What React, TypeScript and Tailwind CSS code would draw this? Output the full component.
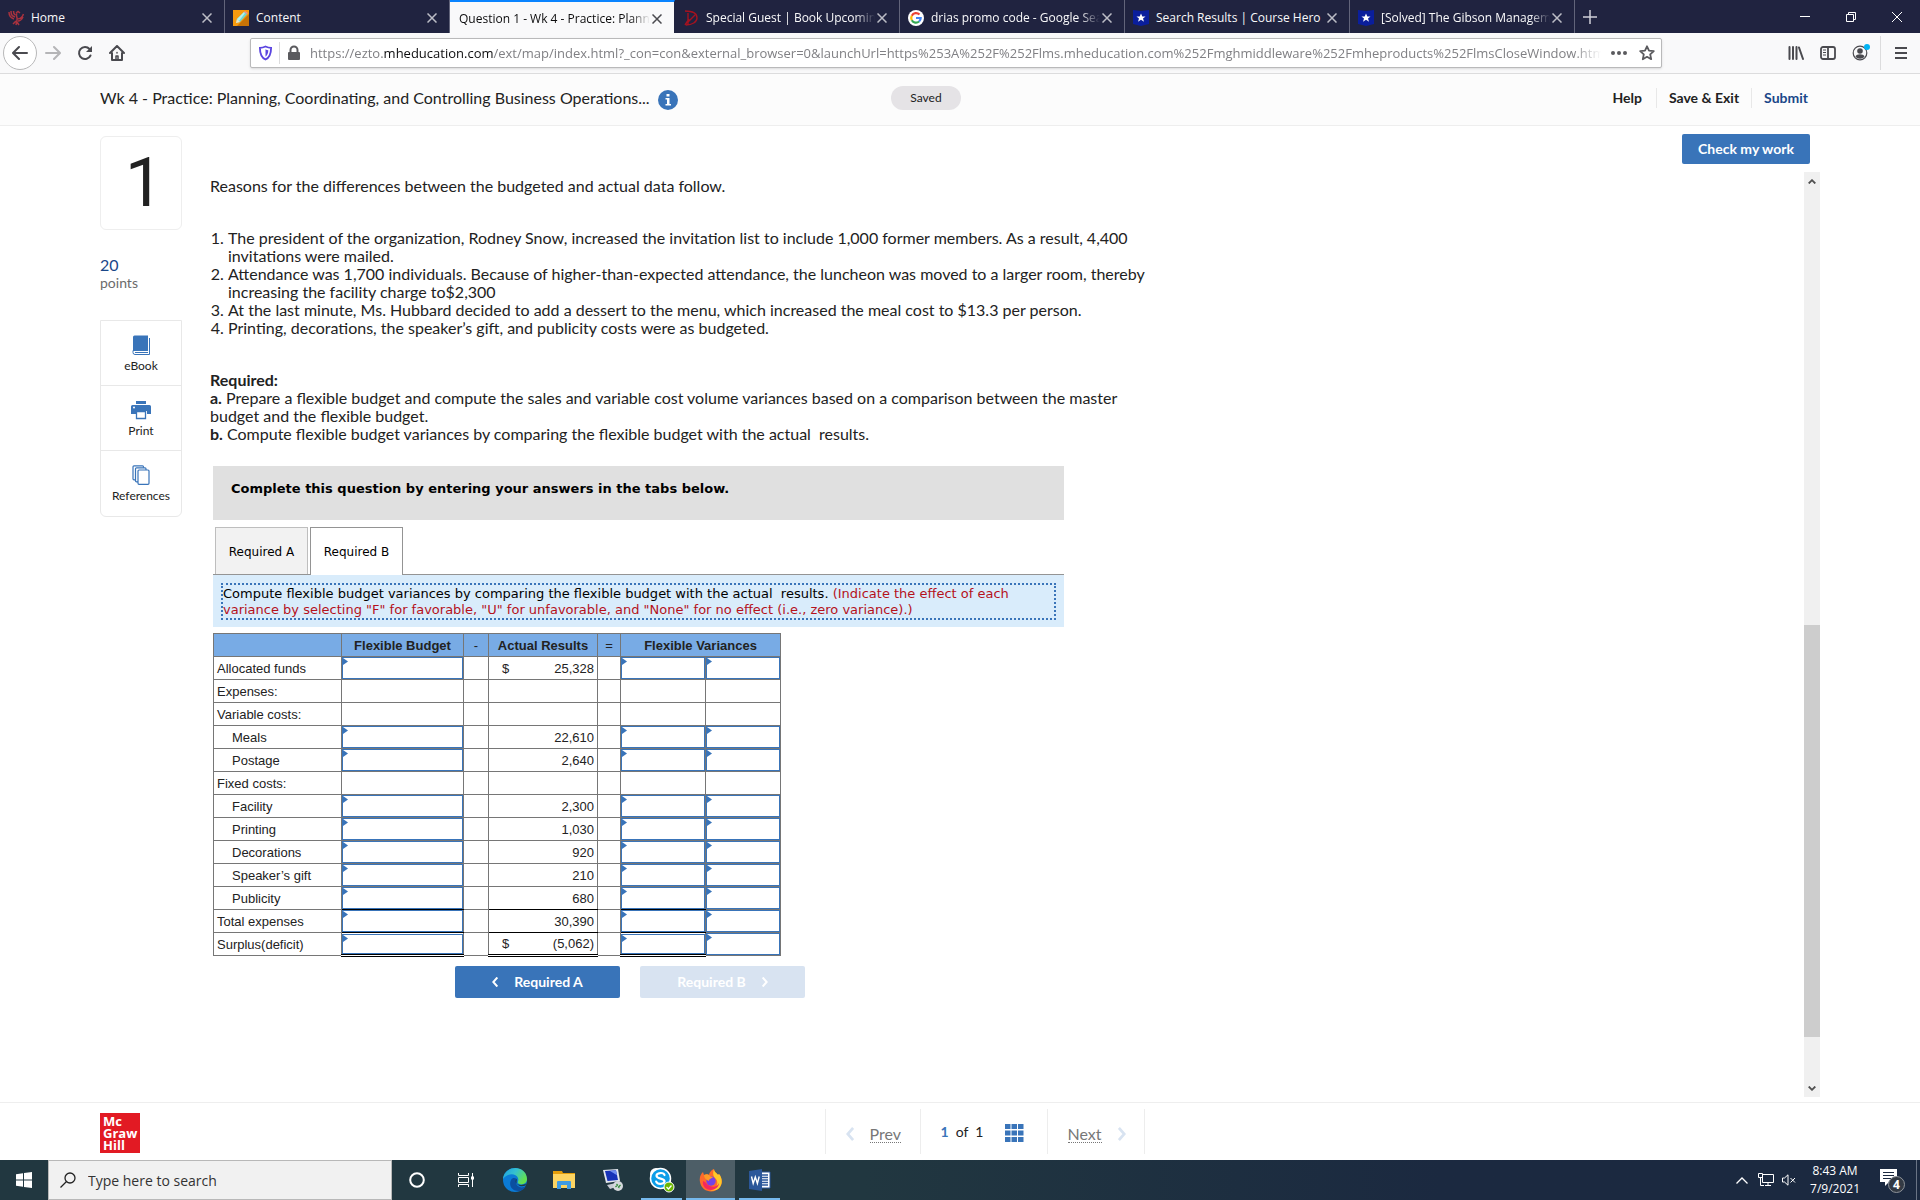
import type { ReactNode } from "react";
import clsx from "clsx";

type Tab = {
	title: string;
	icon?: ReactNode;
	active?: boolean;
	fade?: boolean;
};

type Row = {
	label: string;
	indent?: boolean;
	actual?: string;
	dollar?: boolean;
	blank?: boolean;
	line?: "single" | "double";
};

const PhoenixIcon = () => (
	<svg viewBox="0 0 16 16" className="size-4" fill="none" stroke="#a8323e" strokeWidth="1.500">
		<path d="M1 2c0 4 2 6 5 7M3 1c0 4 1 5 4 6M5.500 1c0 3 .5 3 2 4M15.500 4c-1 3-3 5-6 5M15 7c-1 2-3 4-5 4" />
		<path d="M8 3l2-1.500 2 1.500M9 3c-2 3 1 4 0 7l-1 5M8 11l-3 3M9 12l2 3" />
	</svg>
);

const PencilIcon = () => (
	<svg viewBox="0 0 16 16" className="size-4">
		<path d="M0 0h16v16H0z" fill="#f79a0e" />
		<path d="M16 4v12H4z" fill="#c77306" />
		<path d="M3 13l1-4 7-7 3 2-7 8z" fill="#6fd7d3" />
		<path d="M4 9l7-7 1 1-6 8z" fill="#b8f0ea" />
		<path d="M3 13l1-4 3 3z" fill="#f9e3bd" />
		<path d="M11 2l1-1 3 2-1 1z" fill="#ee8d9b" />
	</svg>
);

const DjIcon = () => (
	<svg viewBox="0 0 16 16" className="size-4" fill="none" stroke="#a5121f" strokeWidth="1.400">
		<path d="M2 1c8 0 12 3 12 7s-5 7-11 7M5 3v12M5 12l7-7M2 15l4-6" />
	</svg>
);

const GoogleIcon = () => (
	<svg viewBox="0 0 16 16" className="size-4">
		<circle cx="8" cy="8" r="8" fill="#fff" />
		<g fill="none" strokeWidth="2.200">
			<path d="M11.500 4.600A4.800 4.800 0 0 0 3.800 5.700" stroke="#ea4335" />
			<path d="M3.800 5.700a4.800 4.800 0 0 0 0 4.600" stroke="#fbbc05" />
			<path d="M3.800 10.300a4.800 4.800 0 0 0 7.300 1.200" stroke="#34a853" />
			<path d="M11.100 11.500A4.800 4.800 0 0 0 12.700 8H8" stroke="#4285f4" />
		</g>
	</svg>
);

const HeroIcon = () => (
	<svg viewBox="0 0 16 16" className="size-4">
		<path d="M0 0l8 1 8-1v14l-8 2-8-2z" fill="#0a1e9c" />
		<path d="M8 3.500l1.300 3h3.200L10 8.500l1 3.200L8 9.800l-3 1.900 1-3.200-2.500-2h3.200z" fill="#fff" />
	</svg>
);

const tabs: Tab[] = [
	{ title: "Home", icon: <PhoenixIcon /> },
	{ title: "Content", icon: <PencilIcon /> },
	{ title: "Question 1 - Wk 4 - Practice: Planni", active: true, fade: true },
	{ title: "Special Guest | Book Upcoming", icon: <DjIcon />, fade: true },
	{ title: "drias promo code - Google Sea", icon: <GoogleIcon />, fade: true },
	{ title: "Search Results | Course Hero", icon: <HeroIcon /> },
	{ title: "[Solved] The Gibson Manageme", icon: <HeroIcon />, fade: true },
];

const rows: Row[] = [
	{ label: "Allocated funds", actual: "25,328", dollar: true },
	{ label: "Expenses:", blank: true },
	{ label: "Variable costs:", blank: true },
	{ label: "Meals", indent: true, actual: "22,610" },
	{ label: "Postage", indent: true, actual: "2,640" },
	{ label: "Fixed costs:", blank: true },
	{ label: "Facility", indent: true, actual: "2,300" },
	{ label: "Printing", indent: true, actual: "1,030" },
	{ label: "Decorations", indent: true, actual: "920" },
	{ label: "Speaker’s gift", indent: true, actual: "210" },
	{ label: "Publicity", indent: true, actual: "680", line: "single" },
	{ label: "Total expenses", actual: "30,390", line: "single" },
	{ label: "Surplus(deficit)", actual: "(5,062)", dollar: true, line: "double" },
];

const CloseIcon = () => (
	<svg viewBox="0 0 10 10" className="size-[10px]" fill="none" stroke="currentColor" strokeWidth="1.500">
		<path d="M.5.5l9 9M9.500.5l-9 9" />
	</svg>
);

const TabStrip = () => (
	<div className="flex h-[33px] bg-[#202340] text-xs text-[#f9f9fa]">
		{tabs.map((tab) => (
			<div
				key={tab.title}
				className={clsx(
					"flex w-[225px] min-w-0 items-center border-r pt-[2px] pr-3 pl-2",
					tab.active ? "border-t-2 border-r-[#202340] border-t-[#0a84ff] bg-[#f9f9fa] pt-0 text-[#0c0c0d]" : "border-[#62647a]",
				)}
			>
				{tab.icon}
				<span
					className={clsx(
						"flex-1 overflow-hidden whitespace-nowrap",
						tab.icon ? "ml-[7px]" : "ml-px",
						tab.fade && "mr-[2px] [mask-image:linear-gradient(to_left,transparent,black_20px)]",
					)}
				>
					{tab.title}
				</span>
				<button type="button" aria-label="Close tab" className={tab.active ? "text-[#4a4a4f]" : "text-[#bcbdc6]"}>
					<CloseIcon />
				</button>
			</div>
		))}
		<button type="button" aria-label="New tab" className="ml-2 text-[#cfd0d8]">
			<svg viewBox="0 0 14 14" className="size-[14px]" fill="none" stroke="currentColor" strokeWidth="1.500">
				<path d="M7 0v14M0 7h14" />
			</svg>
		</button>
		<div className="ml-auto flex items-center gap-9 pr-[18px]">
			<button type="button" aria-label="Minimize">
				<svg viewBox="0 0 10 10" className="size-[10px]" stroke="#fff">
					<path d="M0 4.500h10" />
				</svg>
			</button>
			<button type="button" aria-label="Restore">
				<svg viewBox="0 0 10 10" className="size-[10px]" fill="none" stroke="#fff">
					<path d="M.5 2.500h7v7h-7zM2.500 2V.5h7v7H8" />
				</svg>
			</button>
			<button type="button" aria-label="Close window">
				<svg viewBox="0 0 10 10" className="size-[10px]" fill="none" stroke="#fff">
					<path d="M0 0l10 10M10 0L0 10" />
				</svg>
			</button>
		</div>
	</div>
);

const Toolbar = () => (
	<div className="flex h-[41px] items-center border-b border-[#dcdcdd] bg-[#f9f9fa] text-[#4a4a4f]">
		<button type="button" aria-label="Back" className="ml-[3px] flex size-[34px] items-center justify-center rounded-full border border-[#b8b8b9] bg-white">
			<svg viewBox="0 0 16 16" className="size-4" fill="none" stroke="currentColor" strokeWidth="2" strokeLinecap="round" strokeLinejoin="round">
				<path d="M15 8H1.500M7 2L1 8l6 6" />
			</svg>
		</button>
		<button type="button" aria-label="Forward" className="ml-2 text-[#b5b5b7]">
			<svg viewBox="0 0 16 16" className="size-4" fill="none" stroke="currentColor" strokeWidth="2" strokeLinecap="round" strokeLinejoin="round">
				<path d="M1 8h13.500M9 2l6 6-6 6" />
			</svg>
		</button>
		<button type="button" aria-label="Reload" className="ml-4">
			<svg viewBox="0 0 16 16" className="size-4" fill="none" stroke="currentColor" strokeWidth="2">
				<path d="M13.500 10.500A6 6 0 1 1 12.500 4" strokeLinecap="round" />
				<path d="M15 1v6H9z" fill="currentColor" stroke="none" />
			</svg>
		</button>
		<button type="button" aria-label="Home" className="ml-4">
			<svg viewBox="0 0 16 16" className="size-4" fill="none" stroke="currentColor" strokeWidth="2" strokeLinejoin="round" strokeLinecap="round">
				<path d="M1 8l7-7 7 7M3 8v7h10V8" />
				<path d="M7 15v-4h2v4M8 7.500v.5" strokeWidth="1.500" />
			</svg>
		</button>
		<div className="ml-[125px] flex h-[30px] min-w-0 flex-1 items-center rounded-xs border border-[#b9b9ba] bg-white pr-1 pl-2 shadow-sm">
			<svg viewBox="0 0 14 16" className="h-4 w-[13px] shrink-0" fill="none">
				<path d="M1 2.500C3 2.500 5 2 7 1c2 1 4 1.500 6 1.500 0 6-1 10-6 12.500C2 12.500 1 8.500 1 2.500z" stroke="#5b45e0" strokeWidth="2" />
				<path d="M7 4v8c2-1.500 3-4 3-7-1 0-2-.4-3-1z" fill="#5b45e0" />
			</svg>
			<span className="ml-[7px] h-[22px] w-px bg-[#dcdcdd]" />
			<svg viewBox="0 0 14 16" className="ml-[7px] h-4 w-[14px] shrink-0">
				<path d="M3.500 8V5a3.500 3.500 0 0 1 7 0v3" fill="none" stroke="#5a5a5e" strokeWidth="2" />
				<rect x="1" y="7" width="12" height="8" rx="1" fill="#5a5a5e" />
			</svg>
			<div className="mr-[10px] ml-[9px] flex-1 overflow-hidden pt-px text-[13px] whitespace-nowrap text-[#808084] [mask-image:linear-gradient(to_left,transparent,black_28px)]">
				https://ezto.<span className="text-[#0c0c0d]">mheducation.com</span>
				/ext/map/index.html?_con=con&amp;external_browser=0&amp;launchUrl=https%253A%252F%252Flms.mheducation.com%252Fmghmiddleware%252Fmheproducts%252FlmsCloseWindow.html
			</div>
			<svg viewBox="0 0 16 4" className="h-1 w-4 shrink-0" fill="#5a5a5e">
				<circle cx="2" cy="2" r="2" />
				<circle cx="8" cy="2" r="2" />
				<circle cx="14" cy="2" r="2" />
			</svg>
			<button type="button" aria-label="Bookmark" className="mr-[2px] ml-3">
				<svg viewBox="0 0 16 16" className="size-4" fill="none" stroke="#5a5a5e" strokeWidth="1.800" strokeLinejoin="round">
					<path d="M8 1.300l2 4.400 4.800.5-3.600 3.200 1 4.800L8 11.800l-4.200 2.400 1-4.800L1.200 6.200 6 5.700z" />
				</svg>
			</button>
		</div>
		<div className="ml-[126px] flex items-center gap-4">
			<button type="button" aria-label="Library">
				<svg viewBox="0 0 16 16" className="size-4" fill="none" stroke="currentColor" strokeWidth="2" strokeLinecap="round">
					<path d="M1.500 2v12M5 2v12M8.500 2v12M11 2.500L15 14" />
				</svg>
			</button>
			<button type="button" aria-label="Sidebars">
				<svg viewBox="0 0 16 16" className="size-4" fill="none" stroke="currentColor" strokeWidth="1.800">
					<rect x="1" y="2" width="14" height="12" rx="2" />
					<path d="M8 2v12" />
					<path d="M3 5h3M3 7.500h3M3 10h3" strokeWidth="1" />
				</svg>
			</button>
			<button type="button" aria-label="Account">
				<svg viewBox="0 0 18 18" className="size-[18px]" fill="none">
					<circle cx="8" cy="9" r="6.800" stroke="currentColor" strokeWidth="1.200" />
					<circle cx="8" cy="7" r="2.800" fill="currentColor" />
					<path d="M3.500 12.500c1-3 8-3 9 0-2 3-7 3-9 0z" fill="currentColor" />
					<circle cx="15" cy="3" r="3" fill="#00b3f4" />
				</svg>
			</button>
		</div>
		<span className="ml-[10px] h-[34px] w-px bg-[#dcdcdd]" />
		<button type="button" aria-label="Menu" className="mr-[13px] ml-[14px]">
			<svg viewBox="0 0 12 14" className="h-[14px] w-3" stroke="currentColor" strokeWidth="2">
				<path d="M0 2h12M0 7h12M0 12h12" />
			</svg>
		</button>
	</div>
);

const AssignmentHeader = () => (
	<header className="flex h-[52px] shrink-0 items-center border-b border-[#eee] bg-[#fcfcfc] pr-[112px] pb-1 pl-[100px] text-[#222]">
		<div className="flex flex-1 items-center">
			<h1 className="text-base whitespace-nowrap">Wk 4 - Practice: Planning, Coordinating, and Controlling Business Operations...</h1>
			<button type="button" aria-label="Information" className="ml-2 pt-1">
				<svg viewBox="0 0 20 20" className="size-5">
					<circle cx="10" cy="10" r="10" fill="#3974b9" />
					<path d="M8.500 4h3v2.500h-3zM7.500 8h4v6H13v1.500H7.500V14H9V9.500H7.500z" fill="#fff" />
				</svg>
			</button>
		</div>
		<span className="mr-14 flex h-6 w-[70px] items-center justify-center rounded-full bg-[#e5e3e6] text-xs">Saved</span>
		<nav className="flex flex-1 justify-end text-sm leading-5 font-bold">
			<a href="#help" className="pr-[14px]">Help</a>
			<a href="#save" className="border-x border-[#e8e8e8] px-3">Save &amp; Exit</a>
			<a href="#submit" className="pl-3 text-[#1a4789]">Submit</a>
		</nav>
	</header>
);

const ToolButton = ({ label, children }: { label: string; children: ReactNode }) => (
	<button type="button" className="flex h-[65px] w-full flex-col items-center gap-[3px] pt-[14px] text-xs leading-4 text-[#222]">
		{children}
		{label}
	</button>
);

const SideRail = () => (
	<aside className="w-[82px] shrink-0">
		<div className="h-[94px] rounded-md border border-[#eee] pl-[6px] text-center font-['Roboto',sans-serif] text-[68px] leading-[92px] text-[#222]">1</div>
		<p className="mt-[25px] text-base leading-5 text-[#1a4789]">20</p>
		<p className="text-sm leading-4 text-[#6b6b6b]">points</p>
		<div className="mt-[29px] divide-y divide-[#e8e8e8] rounded-b-md border border-[#e8e8e8]">
			<ToolButton label="eBook">
				<svg viewBox="0 0 18 20" className="h-5 w-[18px]" fill="none">
					<path d="M1 2a1.500 1.500 0 0 1 1.500-1.500H16V16H1z" fill="#3974b9" />
					<path d="M1 15.500v2a2 2 0 0 0 2 2h14.500V3M3 17.500h13" stroke="#3974b9" />
				</svg>
			</ToolButton>
			<ToolButton label="Print">
				<svg viewBox="0 0 20 20" className="size-5" fill="#3974b9">
					<path d="M5 1h10v3H5zM1.500 5h17A1.500 1.500 0 0 1 20 6.500V14h-4v-3H5v3H0V6.500A1.500 1.500 0 0 1 1.500 5z" />
					<path d="M5.500 11.500h9v7h-9z" fill="#fff" stroke="#3974b9" strokeWidth="1.300" />
					<circle cx="3" cy="7.500" r="1" fill="#fff" />
				</svg>
			</ToolButton>
			<ToolButton label="References">
				<svg viewBox="0 0 18 20" className="h-5 w-[18px]" fill="#fff" stroke="#3974b9" strokeWidth="1.200">
					<rect x="1" y=".8" width="10.500" height="14" rx="1" />
					<rect x="3.500" y="2.800" width="10.500" height="14" rx="1" />
					<rect x="6" y="5" width="11" height="14.300" rx="1" />
				</svg>
			</ToolButton>
		</div>
	</aside>
);

const Marker = () => (
	<svg viewBox="0 0 6 7" className="pointer-events-none absolute top-px left-0 h-[7px] w-[6px]">
		<path d="M0 0h1l5 3.500L1 7H0z" fill="#3974b9" />
	</svg>
);

const AnswerCell = ({ row, name, choice }: { row: Row; name: string; choice?: boolean }) => {
	const double = row.line === "double" && !choice;
	return (
		<td
			className={clsx(
				"border border-[#767676] p-0",
				!choice && row.line === "single" && "border-b-black",
				double && "border-b-3 border-b-black [border-bottom-style:double]",
			)}
		>
			{!row.blank && (
				<div className="relative">
					{choice ? (
						<select
							aria-label={`${row.label} ${name}`}
							defaultValue=""
							className="block h-[22px] w-full appearance-none border border-[#3974b9] bg-white"
						>
							<option value="" />
							<option>F</option>
							<option>U</option>
							<option>None</option>
						</select>
					) : (
						<input
							type="text"
							aria-label={`${row.label} ${name}`}
							className={clsx("block w-full border border-[#3974b9] bg-white", double ? "h-5" : "h-[22px]")}
						/>
					)}
					<Marker />
				</div>
			)}
		</td>
	);
};

const cell = "border border-[#767676]";

const BudgetTable = () => (
	<table className="mt-[6px] w-[568px] table-fixed border-collapse font-['Liberation_Sans',sans-serif] text-[13px] leading-[18px] text-[#222]">
		<colgroup>
			<col className="w-[128px]" />
			<col className="w-[122px]" />
			<col className="w-[25px]" />
			<col className="w-[109px]" />
			<col className="w-[23px]" />
			<col className="w-[85px]" />
			<col className="w-[75px]" />
		</colgroup>
		<thead className="bg-[#78abe5]">
			<tr className="h-[23px]">
				<th className={cell} />
				<th className={clsx(cell, "pt-[2px]")}>Flexible Budget</th>
				<th className={clsx(cell, "pt-[2px] font-normal")}>-</th>
				<th className={clsx(cell, "pt-[2px]")}>Actual Results</th>
				<th className={clsx(cell, "pt-[2px] font-normal")}>=</th>
				<th className={clsx(cell, "pt-[2px]")} colSpan={2}>Flexible Variances</th>
			</tr>
		</thead>
		<tbody>
			{rows.map((row) => (
				<tr key={row.label} className="h-[23px]">
					<th scope="row" className={clsx(cell, "pt-[2px] pb-0 text-left font-normal", row.indent ? "pl-[18px]" : "pl-[3px]")}>
						{row.label}
					</th>
					<AnswerCell row={row} name="flexible budget" />
					<td className={cell} />
					<td
						className={clsx(
							cell,
							"pr-[3px] pb-0 pl-[13px]",
							row.line === "single" && "border-b-black",
							row.line === "double" ? "border-b-3 border-b-black pt-0 [border-bottom-style:double]" : "pt-[2px]",
						)}
					>
						<div className="flex justify-between">
							<span>{row.dollar && "$"}</span>
							<span>{row.actual}</span>
						</div>
					</td>
					<td className={cell} />
					<AnswerCell row={row} name="variance" />
					<AnswerCell row={row} name="effect" choice />
				</tr>
			))}
		</tbody>
	</table>
);

const Chevron = ({ left, className }: { left?: boolean; className?: string }) => (
	<svg viewBox="0 0 6 10" className={className} fill="none" stroke="currentColor" strokeWidth="2">
		<path d={left ? "M5.300.5L1.300 5l4 4.500" : "M.7.5l4 4.500-4 4.500"} />
	</svg>
);

const Question = () => (
	<article className="ml-7 flex-1 pt-[41px] text-base leading-[18px] text-[#222]">
		<p>Reasons for the differences between the budgeted and actual data follow.</p>
		<ol className="mt-[34px] list-decimal pl-[18px]">
			<li>
				The president of the organization, Rodney Snow, increased the invitation list to include 1,000 former members. As a result, 4,400
				<br />
				invitations were mailed.
			</li>
			<li>
				Attendance was 1,700 individuals. Because of higher-than-expected attendance, the luncheon was moved to a larger room, thereby
				<br />
				increasing the facility charge to$2,300
			</li>
			<li>At the last minute, Ms. Hubbard decided to add a dessert to the menu, which increased the meal cost to $13.3 per person.</li>
			<li>Printing, decorations, the speaker’s gift, and publicity costs were as budgeted.</li>
		</ol>
		<div className="mt-[34px]">
			<p className="font-bold">Required:</p>
			<p>
				<b>a.</b> Prepare a flexible budget and compute the sales and variable cost volume variances based on a comparison between the master
				<br />
				budget and the flexible budget.
			</p>
			<p>
				<b>b.</b> Compute flexible budget variances by comparing the flexible budget with the actual&nbsp; results.
			</p>
		</div>

		<div className="mt-[23px] ml-[3px] max-w-[851px]">
			<div className="h-[54px] bg-[#e0e0e0] px-[18px] pt-[14px] font-['DejaVu_Sans',sans-serif] text-[13px] font-bold text-black">
				Complete this question by entering your answers in the tabs below.
			</div>
			<div role="tablist" className="mt-[7px] flex gap-[2px] border-b border-[#949494] pl-[2px] font-['DejaVu_Sans',sans-serif] text-[12px] text-black">
				<button type="button" role="tab" className="h-[47px] w-[93px] border border-b-0 border-[#bebebe] bg-[#f2f2f2] pt-px">
					Required A
				</button>
				<button type="button" role="tab" aria-selected="true" className="-mb-px h-[48px] w-[93px] border border-b-0 border-[#949494] bg-white">
					Required B
				</button>
			</div>
			<div className="bg-[#d9ecfb] p-2 pb-[7px]">
				<p className="border-2 border-dotted border-[#3974b9] pt-px font-['DejaVu_Sans',sans-serif] text-[13px] leading-4 text-black">
					Compute flexible budget variances by comparing the flexible budget with the actual&nbsp; results.{" "}
					<span className="text-[#b5121b]">
						(Indicate the effect of each
						<br />
						variance by selecting "F" for favorable, "U" for unfavorable, and "None" for no effect (i.e., zero variance).)
					</span>
				</p>
			</div>
			<BudgetTable />
			<div className="mt-[9px] ml-[242px] flex gap-5 text-sm font-bold text-white">
				<button type="button" className="flex h-8 w-[165px] items-center justify-center gap-4 rounded-xs bg-[#3974b9]">
					<Chevron left className="h-[10px] w-[6px]" />
					Required A
				</button>
				<button type="button" disabled className="flex h-8 w-[165px] items-center justify-center gap-4 rounded-xs bg-[#d8e3f1]">
					Required B
					<Chevron className="h-[10px] w-[6px]" />
				</button>
			</div>
		</div>
	</article>
);

const Scrollbar = () => (
	<div className="flex w-4 flex-1 flex-col items-center bg-[#f0f0f0]">
		<svg viewBox="0 0 8 5" className="mt-[7px] h-[5px] w-2 shrink-0" fill="none" stroke="#505050" strokeWidth="1.800">
			<path d="M.7 4.500L4 1.200l3.300 3.300" />
		</svg>
		<div className="flex-[441]" />
		<div className="w-full flex-[411] bg-[#cdcdcd]" />
		<div className="flex-[49]" />
		<svg viewBox="0 0 8 5" className="mb-[6px] h-[5px] w-2 shrink-0" fill="none" stroke="#505050" strokeWidth="1.800">
			<path d="M.7.5L4 3.800 7.300.5" />
		</svg>
	</div>
);

const Footer = () => (
	<footer className="relative flex h-[58px] shrink-0 items-center justify-center border-t border-[#eee] bg-white text-base">
		<div className="absolute top-[10px] left-[100px] flex size-10 flex-col justify-center bg-[#e21a23] pl-[3px] font-['Open_Sans',sans-serif] text-[13px] leading-[12px] font-bold text-white">
			<span>Mc</span>
			<span>Graw</span>
			<span>Hill</span>
		</div>
		<div className="ml-[49px] flex h-[45px] divide-x divide-[#ededed] border-x border-[#ededed]">
			<div className="flex w-[95px] items-center gap-4 pt-1 pl-[20px] text-[#777]">
				<Chevron left className="h-[14px] w-2 text-[#d8e3f1]" />
				<a href="#prev" className="border-b border-dotted border-[#777] leading-[17px]">Prev</a>
			</div>
			<div className="flex w-[127px] items-center pt-px pl-5 text-sm text-[#222]">
				<span className="font-bold text-[#3974b9]">1</span>
				<span className="mx-[7px]">of</span>
				<span>1</span>
				<button type="button" aria-label="Question grid" className="ml-[22px] pt-[2px]">
					<svg viewBox="0 0 19 18" className="h-[18px] w-[19px]" fill="#3974b9">
						{[0, 6.5, 13].map((y) => [0, 6.5, 13].map((x) => <rect key={`${x}-${y}`} x={x} y={y} width="5.500" height="5" />))}
					</svg>
				</button>
			</div>
			<div className="flex w-[96px] items-center gap-4 pt-1 pl-5 text-[#777]">
				<a href="#next" className="border-b border-dotted border-[#777] leading-[17px]">Next</a>
				<Chevron className="h-[14px] w-2 text-[#d8e3f1]" />
			</div>
		</div>
	</footer>
);

const EdgeIcon = () => (
	<svg viewBox="0 0 24 24" className="size-6">
		<defs>
			<linearGradient id="edge-top" x1="0" y1="0" x2="1" y2=".5">
				<stop offset="0" stopColor="#1b9de2" />
				<stop offset=".5" stopColor="#35c1d0" />
				<stop offset="1" stopColor="#63e04f" />
			</linearGradient>
		</defs>
		<circle cx="12" cy="12" r="12" fill="#0b7bd6" />
		<path d="M0 11C1-3 23-4 24 11c0 5-6 7-9 4-1-1 1-2 0-5C13 5 4 5 0 11z" fill="url(#edge-top)" />
		<path d="M8 12c-3 6 2 12 9 11 3-1 5-3 6-5-4 3-10 1-10-4 0-2 1-3 1-3s-4-3-6 1z" fill="#0b4fa0" />
		<path d="M14 11c-2 1-2 4 1 5.500 3 1 7 0 8-1l-.5 2c-4 2-9 0-9-3.500 0-2 .5-3 .5-3z" fill="#213740" />
	</svg>
);

const FolderIcon = () => (
	<svg viewBox="0 0 22 18" className="h-[18px] w-[22px]">
		<path d="M0 0h9l1 2h12v15H0z" fill="#e39d0b" />
		<path d="M0 3h22v14H0z" fill="#fcd462" />
		<path d="M4 18v-7a1 1 0 0 1 1-1h12a1 1 0 0 1 1 1v7h-4v-4H8v4z" fill="#3f9be3" />
	</svg>
);

const RemoteIcon = () => (
	<svg viewBox="0 0 24 24" className="size-6">
		<path d="M2 2l15-1 2 12-14 2z" fill="#e2e6ee" />
		<path d="M4 3l11-.7 2 9.700L6.500 13z" fill="#1732b8" />
		<path d="M9 3l6-.7 1 5z" fill="#6d8cf0" />
		<path d="M6 17l9-2 3 3-9 3z" fill="#c9ccd4" />
		<circle cx="17" cy="18" r="5" fill="#d5d8dc" />
		<path d="M14.500 19l2-2-1-1M19.500 17l-2 2 1 1" fill="none" stroke="#2f8a36" strokeWidth="1.200" />
	</svg>
);

const SkypeIcon = () => (
	<svg viewBox="0 0 26 26" className="size-[26px]">
		<circle cx="7" cy="7" r="6" fill="#fff" />
		<circle cx="16" cy="16" r="6" fill="#fff" />
		<circle cx="11.500" cy="11.500" r="10" fill="#0c9ee8" stroke="#fff" strokeWidth="1.500" />
		<path d="M15.500 8c-1-3-8-2.500-8 .8 0 3.700 8 2 8 5.500 0 3.200-7 3.500-8.300.3" fill="none" stroke="#fff" strokeWidth="2.200" strokeLinecap="round" />
		<circle cx="20" cy="20" r="5" fill="#6bb700" stroke="#fff" />
		<path d="M17.500 20l2 2 3-3.500" fill="none" stroke="#fff" strokeWidth="1.300" />
	</svg>
);

const FirefoxIcon = () => (
	<svg viewBox="0 0 24 24" className="size-6">
		<path d="M1 14C0 9 2 6 4 4l1 3c2-1 4-1 5 0 0-2 2-5 5-6 0 3 3 4 4 6l1-1c3 4 4 9 1 13-5 7-18 6-20-5z" fill="#ff6a2a" />
		<path d="M15 1c0 3 3 4 4 6l1-1c4 5 3 10 1 13-3 4-7 4-10 3 7-1 9-7 6-11-2-2-4-4-2-10z" fill="#ffc928" />
		<path d="M4 13c-1 5 3 9 8 9 4 0 8-3 8-7-1 3-5 5-9 3-3-1-4-4-7-5z" fill="#f5275e" />
		<circle cx="12" cy="13" r="4.700" fill="#7542e5" />
		<path d="M5 7c2-1 4-1 5 0 1 1 2 2 4 2-1 2-4 1-4 4-3-1-5-3-5-6z" fill="#ff9a25" />
	</svg>
);

const WordIcon = () => (
	<svg viewBox="0 0 22 22" className="size-[22px]">
		<path d="M12 3h9v16h-9z" fill="#fff" stroke="#2b579a" />
		<path d="M13 6h6M13 8.500h6M13 11h6M13 13.500h6M13 16h6" stroke="#2b579a" strokeWidth="1.300" />
		<path d="M0 2l13-2v22L0 20z" fill="#2b579a" />
		<path d="M2.500 7.500L4.200 14.500 6.300 8l2.100 6.500 1.800-7" fill="none" stroke="#fff" strokeWidth="1.400" />
	</svg>
);

const TaskButton = ({ label, running, active, children }: { label: string; running?: boolean; active?: boolean; children: ReactNode }) => (
	<button
		type="button"
		aria-label={label}
		className={clsx("relative flex h-full w-[49px] items-center justify-center", active && "bg-[#4d5e67]")}
	>
		{children}
		{running && <span className={clsx("absolute bottom-0 h-[2px] bg-[#76b9ed]", active ? "inset-x-0" : "inset-x-1")} />}
	</button>
);

const Taskbar = () => (
	<div className="flex h-10 shrink-0 items-center bg-linear-to-r from-[#213740] from-45% to-[#1b2940] to-75% font-['Open_Sans','Noto_Sans',sans-serif] text-white">
		<button type="button" aria-label="Start" className="flex h-full w-12 items-center justify-center">
			<svg viewBox="0 0 16 16" className="size-4" fill="#fff">
				<path d="M0 2.300l7-1v6.200H0zM8 1.100L16 0v7.500H8zM0 8.500h7v6.200l-7-1zM8 8.500h8V16l-8-1.100z" />
			</svg>
		</button>
		<label className="flex h-full w-[344px] items-center border border-[#b8b8b8] bg-[#f1f1f1] pl-[11px]">
			<svg viewBox="0 0 16 16" className="size-4" fill="none" stroke="#222" strokeWidth="1.300">
				<circle cx="10" cy="6" r="5" />
				<path d="M6.500 9.500L.5 15.500" />
			</svg>
			<input
				type="text"
				aria-label="Search"
				placeholder="Type here to search"
				className="ml-3 min-w-0 flex-1 bg-transparent text-[14px] text-[#222] outline-none placeholder:text-[#333]"
			/>
		</label>
		<TaskButton label="Cortana">
			<svg viewBox="0 0 16 16" className="size-4" fill="none" stroke="#fff" strokeWidth="2">
				<circle cx="8" cy="8" r="6.800" />
			</svg>
		</TaskButton>
		<TaskButton label="Task view">
			<svg viewBox="0 0 16 16" className="size-4" fill="none" stroke="#fff">
				<path d="M.5 1v2.500h10V1M.5 15v-2.500h10V15M.5 5.500h10v5H.5zM14.500 1v14" />
				<path d="M13 4.500h3v3h-3z" fill="#fff" stroke="none" />
			</svg>
		</TaskButton>
		<TaskButton label="Edge"><EdgeIcon /></TaskButton>
		<TaskButton label="File Explorer"><FolderIcon /></TaskButton>
		<TaskButton label="Remote Desktop"><RemoteIcon /></TaskButton>
		<TaskButton label="Skype" running><SkypeIcon /></TaskButton>
		<TaskButton label="Firefox" running active><FirefoxIcon /></TaskButton>
		<TaskButton label="Word" running><WordIcon /></TaskButton>
		<div className="ml-auto flex h-full items-center">
			<svg viewBox="0 0 12 7" className="h-[7px] w-3" fill="none" stroke="#fff" strokeWidth="1.300">
				<path d="M.5 6.500L6 1l5.500 5.500" />
			</svg>
			<svg viewBox="0 0 16 14" className="ml-[10px] h-[14px] w-4" fill="none" stroke="#fff">
				<path d="M4.500 1.500h11v8h-11zM10 9.500v3M7 12.500h6M.5.5h4v4h-4zM2.500 4.500v8H6" />
			</svg>
			<svg viewBox="0 0 14 12" className="ml-2 h-3 w-[14px]" fill="none" stroke="#fff">
				<path d="M.5 4h2L6 .8v10.400L2.500 8h-2zM8.500 4l4.500 4.500M13 4L8.500 8.500" />
			</svg>
			<div className="ml-[14px] text-center text-xs leading-[18px]">
				<p>8:43 AM</p>
				<p>7/9/2021</p>
			</div>
			<button type="button" aria-label="Notifications" className="relative ml-5 h-[26px] w-[26px]">
				<svg viewBox="0 0 26 26" className="size-[26px]">
					<path d="M0 2h17v13H9l-4 4v-4H0z" fill="#fff" />
					<path d="M3 5.500h11M3 8.500h11M3 11.500h8" stroke="#1b2940" />
					<circle cx="16.500" cy="17.500" r="8" fill="#333a44" stroke="#8f949b" />
				</svg>
				<span className="absolute top-[10px] left-[13px] text-xs leading-[15px] font-bold">4</span>
			</button>
			<span className="ml-[10px] h-full w-px bg-[#6a7485]" />
			<span className="w-[3px]" />
		</div>
	</div>
);

const App = () => (
	<div className="flex min-h-screen flex-col bg-white font-['Lato',sans-serif]">
		<div className="font-['Open_Sans','Noto_Sans',sans-serif]">
			<TabStrip />
			<Toolbar />
		</div>
		<AssignmentHeader />
		<main className="flex flex-1 pr-[100px] pl-[100px]">
			<div className="flex flex-1 items-start pt-[10px]">
				<SideRail />
				<Question />
			</div>
			<div className="flex flex-col items-end pt-2 pb-[5px]">
				<button type="button" className="mr-[10px] mb-2 h-[30px] w-[128px] rounded-xs bg-[#3974b9] text-sm font-bold text-white">
					Check my work
				</button>
				<Scrollbar />
			</div>
		</main>
		<Footer />
		<Taskbar />
	</div>
);

export default App;
